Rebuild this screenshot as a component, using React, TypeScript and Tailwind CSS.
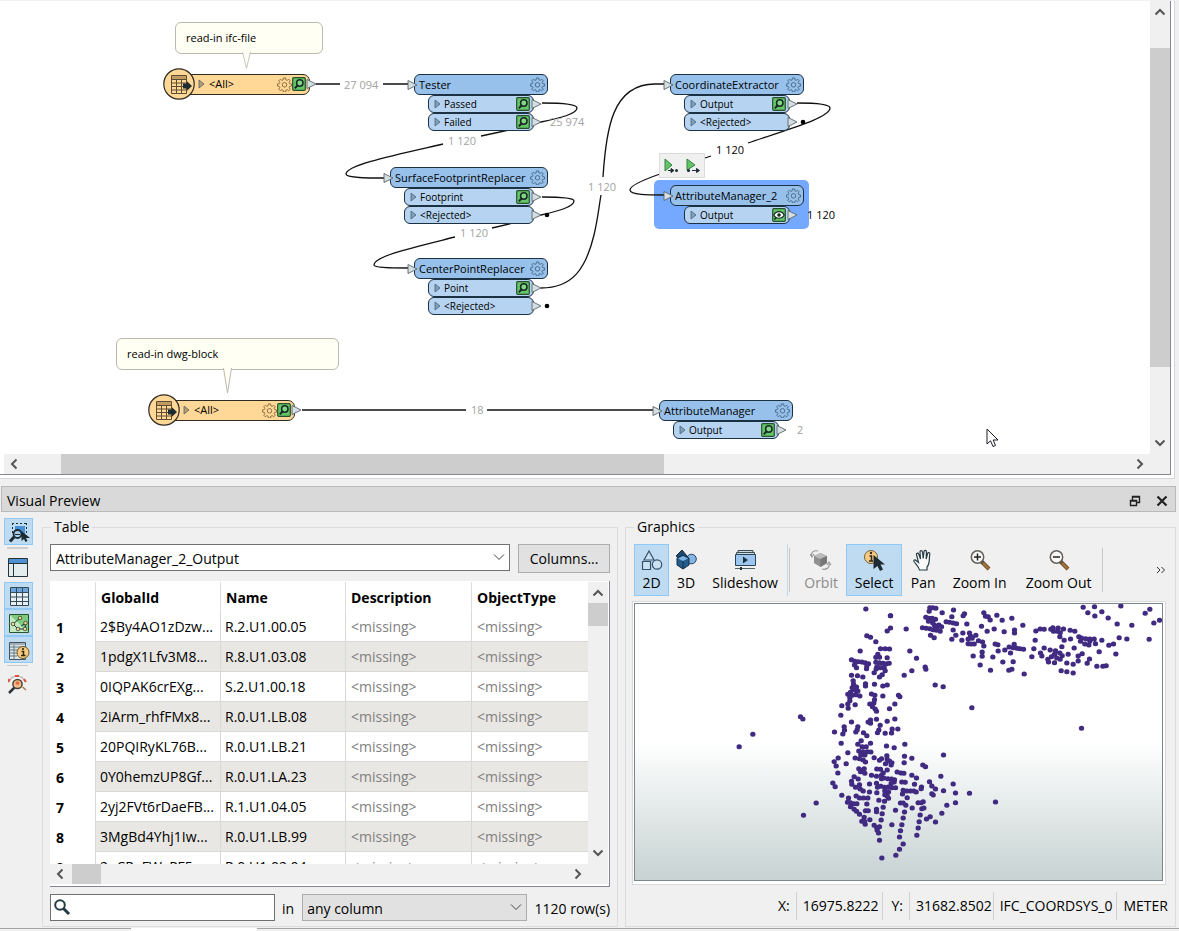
import { type ReactNode } from 'react'
import clsx from 'clsx'

interface PortInfo {
  name: string
  inspect?: 'lens' | 'eye'
}

interface TransformerInfo {
  name: string
  place: string
  ports: PortInfo[]
}

const TRANSFORMERS: TransformerInfo[] = [
  { name: 'Tester', place: 'left-[414px] top-[74px] w-[134px]', ports: [{ name: 'Passed', inspect: 'lens' }, { name: 'Failed', inspect: 'lens' }] },
  { name: 'SurfaceFootprintReplacer', place: 'left-[390px] top-[167px] w-[158px]', ports: [{ name: 'Footprint', inspect: 'lens' }, { name: '<Rejected>' }] },
  { name: 'CenterPointReplacer', place: 'left-[414px] top-[258px] w-[134px]', ports: [{ name: 'Point', inspect: 'lens' }, { name: '<Rejected>' }] },
  { name: 'CoordinateExtractor', place: 'left-[670px] top-[74px] w-[134px]', ports: [{ name: 'Output', inspect: 'lens' }, { name: '<Rejected>' }] },
  { name: 'AttributeManager_2', place: 'left-[670px] top-[185px] w-[134px]', ports: [{ name: 'Output', inspect: 'eye' }] },
  { name: 'AttributeManager', place: 'left-[659px] top-[400px] w-[134px]', ports: [{ name: 'Output', inspect: 'lens' }] },
]

const EDGES = [
  'M316 84H340M383 84H408',
  'M542 103C562 103 577 104 577 108C577 114 560 118 541 122C520 128 500 132 481 136M443 144C395 155 346 165 346 174C346 178 368 178 386 178',
  'M542 197C560 197 574 198 574 201C574 207 558 211 541 215C525 220 510 224 492 228M455 237C415 247 374 256 374 265C374 268 394 268 408 268',
  'M541 288C573 288 586 268 594 235C598 218 599 206 601 195M603 177C606 130 612 84 655 84H664',
  'M797 103C815 103 830 104 830 108C830 118 785 130 748 143M711 156L705 158M660 174C640 181 630 186 630 190C630 195 648 195 664 195',
  'M302 410H466M487 410H654',
]

const COUNTS = [
  { value: '27 094', place: 'left-[344px] top-[77px] text-[#a2a2a2]' },
  { value: '25 974', place: 'left-[550px] top-[114px] text-[#a2a2a2]' },
  { value: '1 120', place: 'left-[448px] top-[133px] text-[#a2a2a2]' },
  { value: '1 120', place: 'left-[460px] top-[225px] text-[#a2a2a2]' },
  { value: '1 120', place: 'left-[588px] top-[179px] text-[#a2a2a2]' },
  { value: '1 120', place: 'left-[716px] top-[142px] text-black' },
  { value: '1 120', place: 'left-[807px] top-[207px] text-black' },
  { value: '18', place: 'left-[471px] top-[402px] text-[#a2a2a2]' },
  { value: '2', place: 'left-[797px] top-[422px] text-[#a2a2a2]' },
]

const ROWS = [
  ['2$By4AO1zDzw...', 'R.2.U1.00.05'],
  ['1pdgX1Lfv3M8...', 'R.8.U1.03.08'],
  ['0IQPAK6crEXg...', 'S.2.U1.00.18'],
  ['2iArm_rhfFMx8...', 'R.0.U1.LB.08'],
  ['20PQIRyKL76B...', 'R.0.U1.LB.21'],
  ['0Y0hemzUP8Gf...', 'R.0.U1.LA.23'],
  ['2yj2FVt6rDaeFB...', 'R.1.U1.04.05'],
  ['3MgBd4Yhj1Iw...', 'R.0.U1.LB.99'],
  ['2oCRaFWxPF5...', 'R.0.U1.02.04'],
]

// x, y pairs in thirds of a pixel
const TOWER_POINTS = [
  439, 27, 513, 47, 513, 84, 503, 93, 560, 87, 442, 107, 453, 112, 469, 125, 422, 153, 483, 146, 497, 146, 510, 147,
  475, 163, 469, 172, 480, 172, 503, 173, 571, 153, 591, 175, 617, 201, 619, 208, 577, 212, 554, 226, 647, 255, 671, 260,
  757, 323, 396, 179, 406, 184, 416, 185, 427, 186, 437, 188, 447, 191, 405, 195, 411, 203, 442, 199, 441, 206, 469, 187,
  480, 188, 491, 190, 502, 191, 509, 190, 472, 201, 483, 203, 494, 203, 497, 212, 464, 218, 470, 207, 488, 224, 480, 231,
  396, 226, 414, 227, 430, 231, 401, 242, 402, 252, 438, 251, 438, 258, 465, 253, 490, 258, 503, 255, 398, 263, 411, 261,
  406, 270, 415, 273, 385, 283, 393, 277, 409, 284, 421, 288, 391, 293, 398, 286, 456, 282, 466, 286, 490, 288, 537, 286,
  541, 290, 391, 302, 385, 312, 407, 314, 367, 317, 386, 325, 465, 299, 463, 309, 451, 312, 459, 320, 467, 327, 471, 334,
  526, 312, 510, 326, 364, 346, 396, 366, 243, 350, 250, 357, 100, 403, 59, 440, 471, 358, 453, 360, 453, 370, 446, 366,
  503, 364, 526, 357, 482, 376, 374, 380, 375, 391, 370, 402, 415, 380, 413, 389, 409, 396, 345, 396, 432, 398, 442, 407,
  478, 390, 474, 398, 497, 400, 518, 387, 535, 387, 516, 399, 365, 430, 425, 422, 415, 433, 428, 440, 440, 440, 453, 430,
  418, 453, 431, 455, 444, 455, 454, 456, 501, 438, 524, 443, 556, 433, 385, 458, 424, 464, 436, 465, 356, 474, 344, 485,
  350, 498, 380, 491, 407, 474, 420, 476, 431, 480, 438, 486, 464, 473, 480, 481, 486, 476, 502, 467, 503, 478, 510, 483,
  517, 488, 498, 491, 515, 495, 555, 469, 577, 475, 554, 488, 672, 465, 610, 495, 618, 500, 355, 519, 418, 506, 434, 506,
  423, 515, 436, 520, 427, 511, 472, 507, 483, 508, 503, 510, 491, 519, 486, 526, 456, 526, 471, 529, 404, 530, 416, 537,
  533, 516, 544, 519, 553, 520, 577, 526, 591, 534, 664, 529, 493, 534, 505, 536, 516, 537, 525, 539, 486, 536, 340, 549,
  347, 560, 396, 544, 397, 553, 420, 554, 408, 562, 422, 567, 450, 552, 471, 550, 474, 562, 484, 559, 495, 562, 506, 561,
  517, 563, 528, 563, 515, 550, 524, 546, 547, 546, 557, 547, 585, 553, 630, 545, 637, 558, 648, 567, 701, 552, 431, 573,
  450, 576, 472, 578, 496, 573, 507, 576, 551, 571, 562, 573, 573, 573, 583, 573, 590, 576, 606, 561, 605, 566, 672, 572,
  637, 581, 641, 585, 708, 579, 750, 580, 367, 586, 387, 594, 410, 588, 420, 594, 432, 594, 445, 594, 478, 601, 496, 584,
  503, 588, 507, 595, 495, 604, 549, 582, 563, 593, 384, 607, 393, 608, 403, 611, 412, 611, 393, 620, 404, 628, 442, 612,
  543, 609, 551, 609, 559, 616, 596, 608, 605, 608, 611, 605, 578, 624, 607, 626, 613, 624, 708, 608, 682, 616, 290, 609,
  252, 646, 411, 634, 420, 643, 438, 632, 446, 632, 471, 628, 471, 635, 491, 622, 488, 641, 528, 631, 555, 636, 551, 654,
  602, 645, 667, 640, 434, 652, 427, 664, 435, 664, 451, 659, 437, 673, 485, 660, 599, 665, 621, 657, 632, 650, 648, 666,
  464, 676, 472, 684, 480, 680, 473, 691, 477, 699, 517, 674, 547, 674, 543, 692, 596, 684, 592, 706, 480, 721, 540, 711,
  551, 732, 540, 748, 529, 766, 487, 774,
]

const FIELD_POINTS = [
  151, 38, 160, 38, 169, 40, 149, 49, 188, 53, 222, 45, 255, 56, 251, 62, 139, 67, 148, 70, 158, 70, 168, 73, 147, 79,
  217, 65, 200, 80, 210, 82, 221, 84, 231, 86, 262, 87, 160, 84, 165, 91, 178, 90, 173, 95, 186, 95, 129, 98, 140, 100,
  151, 101, 161, 104, 171, 106, 182, 109, 153, 121, 164, 128, 221, 105, 229, 121, 217, 133, 250, 114, 247, 136, 270, 114,
  273, 123, 266, 132, 278, 130, 289, 121, 266, 146, 275, 147, 284, 147, 297, 137, 309, 141, 313, 153, 306, 94, 323, 109,
  313, 53, 318, 64, 326, 65, 332, 75, 352, 61, 368, 76, 397, 70, 344, 102, 374, 110, 405, 105, 405, 114, 430, 91, 281, 183,
  308, 171, 308, 184, 340, 186, 302, 210, 347, 147, 355, 149, 356, 168, 376, 165, 389, 156, 404, 148, 401, 158, 393, 174,
  412, 160, 421, 161, 432, 163, 370, 201, 401, 200, 388, 226, 397, 223, 333, 226, 434, 237, 33, 62, 469, 108, 482, 102,
  494, 103, 467, 136, 463, 161, 457, 185, 494, 159, 483, 174, 487, 183, 512, 165, 528, 167, 525, 178, 516, 185, 532, 189,
  505, 193, 507, 201, 525, 203, 514, 103, 520, 98, 536, 99, 522, 109, 533, 109, 542, 113, 552, 102, 541, 125, 554, 136,
  572, 106, 586, 109, 573, 132, 547, 155, 584, 159, 541, 174, 548, 182, 542, 193, 566, 178, 562, 204, 545, 227, 562, 230,
  581, 208, 581, 234, 596, 183, 608, 176, 596, 198, 598, 125, 606, 129, 619, 131, 631, 132, 644, 132, 603, 139, 616, 147,
  628, 150, 648, 146, 631, 139, 667, 136, 630, 192, 623, 205, 652, 214, 670, 214, 680, 212, 659, 170, 688, 151, 702, 147,
  709, 177, 719, 128, 742, 132, 713, 87, 686, 69, 646, 63, 625, 53, 611, 37, 645, 35, 667, 50, 724, 33, 757, 91, 797, 55,
  811, 43, 823, 84, 840, 76, 809, 133, 606, 400, 348, 621,
]

function toDots(points: number[]) {
  let path = ''
  for (let i = 0; i < points.length; i += 2) {
    path += `M${points[i]} ${points[i + 1]}h1`
  }
  return path
}

function Gear({ className }: { className?: string }) {
  return (
    <svg viewBox="0 0 24 24" className={clsx('size-[15px] shrink-0', className)} fill="none" stroke="currentColor" strokeWidth="1.5">
      <path d="M10.300 1.500h3.400l.5 3 2.100.9 2.500-1.800 2.400 2.400-1.800 2.500.9 2.100 3 .5v3.400l-3 .5-.9 2.100 1.800 2.500-2.400 2.400-2.500-1.800-2.100.9-.5 3h-3.400l-.5-3-2.100-.9-2.500 1.800-2.400-2.400 1.800-2.500-.9-2.100-3-.5v-3.400l3-.5.9-2.100-1.800-2.500 2.400-2.400 2.500 1.800 2.100-.9z" />
      <circle cx="12" cy="12.500" r="3.600" />
    </svg>
  )
}

function InspectIcon({ kind }: { kind: 'lens' | 'eye' }) {
  return (
    <svg viewBox="0 0 14 14" className="size-[14px] shrink-0">
      <rect x=".7" y=".7" width="12.600" height="12.600" rx="1" fill="#65c466" stroke="#27502f" strokeWidth="1.200" />
      {kind === 'lens' ? (
        <g fill="none" stroke="#182a26">
          <path d="M5.500 8.500 2.800 11.400" strokeWidth="2" />
          <circle cx="7.800" cy="6" r="3.200" strokeWidth="1.500" fill="#82d783" />
        </g>
      ) : (
        <g>
          <path d="M1.800 7C3.800 2.500 10.200 2.500 12.200 7 10.200 11.300 3.800 11.300 1.800 7Z" fill="#f2fbf2" stroke="#182a26" strokeWidth="1.200" />
          <circle cx="7" cy="7" r="1.800" fill="#182a26" />
          <path d="m4 9.500-1.600 2.100" stroke="#182a26" strokeWidth="1.500" />
        </g>
      )}
    </svg>
  )
}

function Expander({ className }: { className?: string }) {
  return (
    <svg viewBox="0 0 7 10" className={clsx('h-[10px] w-[7px] shrink-0', className)}>
      <path d="M1 1v8l5-4z" fill="currentColor" stroke="#4f6272" strokeWidth=".8" />
    </svg>
  )
}

function Connector({ className }: { className: string }) {
  return (
    <svg viewBox="0 0 11 12" className={clsx('absolute h-[12px] w-[11px]', className)}>
      <path d="M1 1.500v9L10 6z" fill="#d3dfe3" stroke="#5c6567" strokeWidth=".9" />
    </svg>
  )
}

function Transformer({ name, place, ports }: TransformerInfo) {
  return (
    <div className={clsx('absolute', place)}>
      <div className="relative flex h-[21px] items-center justify-between rounded-[6px] border border-[#1c3142] bg-[#97c1ea] pr-[2px] pl-1 text-[11px] whitespace-nowrap">
        <Connector className="-left-[8px]" />
        <span>{name}</span>
        <Gear className="text-[#45698a]" />
      </div>
      {ports.map((port) => (
        <div
          key={port.name}
          className="relative mx-[14px] flex h-[18px] items-center rounded-[6px] border border-[#1c3142] bg-[#b6d4f1] pr-[3px] pl-[5px] text-[10px]"
        >
          <Expander className="text-[#7f9fba]" />
          <span className="ml-[3px] flex-1">{port.name}</span>
          {port.inspect && <InspectIcon kind={port.inspect} />}
          <Connector className="-right-[9px]" />
        </div>
      ))}
    </div>
  )
}

function Reader({ place, width }: { place: string; width: string }) {
  return (
    <div className={clsx('absolute flex items-center', place)}>
      <svg viewBox="0 0 32 32" className="z-10 size-[32px] shrink-0">
        <circle cx="16" cy="16" r="15.200" fill="#ffd898" stroke="#2e2a22" strokeWidth="1.200" />
        <g fill="none" stroke="#5d4c2d">
          <path d="M8.500 7.500h15v18h-15zM8.500 11.500h15M8.500 15h15M8.500 18.500h15M8.500 22h15M13.500 11.500v14M18.500 11.500v14" />
          <path d="M9 9.500h14" stroke="#c09c63" strokeWidth="3" />
        </g>
        <path d="M20 15.500h4v-2.300l5 4.800-5 4.800v-2.300h-4z" fill="#1c2c30" />
      </svg>
      <div
        className={clsx(
          'relative -ml-[16px] flex h-[21px] items-center rounded-r-[7px] border border-[#2e2a22] bg-[#ffd898] pr-[3px] pl-[18px] text-[11px]',
          width,
        )}
      >
        <Expander className="text-[#b79c6c]" />
        <span className="ml-1 flex-1">&lt;All&gt;</span>
        <Gear className="text-[#86693a]" />
        <InspectIcon kind="lens" />
        <Connector className="-right-[8px]" />
      </div>
    </div>
  )
}

function Note({ place, tail, children }: { place: string; tail: string; children: ReactNode }) {
  return (
    <div className={clsx('absolute flex h-[32px] items-center rounded-[6px] border border-[#b9b9b2] bg-[#fffff3] px-[10px] text-[11px]', place)}>
      {children}
      <svg viewBox="0 0 9 26" preserveAspectRatio="none" className={clsx('absolute top-full -mt-px w-[9px]', tail)}>
        <path d="M.5 0 4.500 25 8.500 0" fill="#fffff3" stroke="#b9b9b2" />
      </svg>
    </div>
  )
}

function Chevron({ className }: { className?: string }) {
  return (
    <svg viewBox="0 0 12 12" className={clsx('size-[12px] shrink-0', className)}>
      <path d="m1.500 8.500 4.500-4.500 4.500 4.500" fill="none" stroke="#555" strokeWidth="2" />
    </svg>
  )
}

function DropArrow() {
  return (
    <svg viewBox="0 0 12 12" className="pointer-events-none absolute top-[7px] right-[5px] size-[12px]">
      <path d="m1 3.500 5 5 5-5" fill="none" stroke="#444" />
    </svg>
  )
}

function VerticalScrollbar({ thumb }: { thumb: string }) {
  return (
    <div className="flex w-[20px] shrink-0 flex-col items-center bg-[#f0f0f0]">
      <button type="button" aria-label="Scroll up" className="flex h-[21px] items-center">
        <Chevron />
      </button>
      <div className="relative w-full flex-1">
        <div className={clsx('absolute inset-x-0 bg-[#cdcdcd]', thumb)} />
      </div>
      <button type="button" aria-label="Scroll down" className="flex h-[23px] items-center">
        <Chevron className="rotate-180" />
      </button>
    </div>
  )
}

function HorizontalScrollbar({ thumb }: { thumb: string }) {
  return (
    <div className="flex h-[20px] flex-1 items-center bg-[#f0f0f0] px-1">
      <button type="button" aria-label="Scroll left">
        <Chevron className="-rotate-90" />
      </button>
      <div className="relative h-full flex-1">
        <div className={clsx('absolute inset-y-0 bg-[#cdcdcd]', thumb)} />
      </div>
      <button type="button" aria-label="Scroll right">
        <Chevron className="rotate-90" />
      </button>
    </div>
  )
}

function Workspace() {
  return (
    <section className="h-[480px] shrink-0 pt-px pr-[4px]" aria-label="Workspace canvas">
      <div className="flex h-[478px] flex-col border-r border-b border-[#d5d5da] bg-white pr-[3px] pb-[3px]">
        <div className="flex min-h-0 flex-1 flex-col border-r border-b border-[#828790]">
          <div className="flex min-h-0 flex-1">
            <div className="relative min-w-0 flex-1 overflow-hidden">
              <div className="absolute -top-px left-0 size-full">
                <div className="absolute top-[180px] left-[654px] h-[49px] w-[155px] rounded-[5px] bg-[#75a9ff]" />
                <svg width="900" height="452" className="absolute top-0 left-0">
                  {EDGES.map((edge) => (
                    <path key={edge} d={edge} fill="none" stroke="#111" strokeWidth="1.300" />
                  ))}
                  <g fill="#000">
                    <circle cx="547" cy="215" r="2.300" />
                    <circle cx="547" cy="306" r="2.300" />
                    <circle cx="803" cy="122" r="2.300" />
                  </g>
                </svg>
                {TRANSFORMERS.map((transformer) => (
                  <Transformer key={transformer.name} {...transformer} />
                ))}
                <Reader place="left-[163px] top-[68px]" width="w-[131px]" />
                <Reader place="left-[148px] top-[394px]" width="w-[131px]" />
                <Note place="left-[175px] top-[22px] w-[148px]" tail="left-[66px] h-[17px]">
                  read-in ifc-file
                </Note>
                <Note place="left-[116px] top-[338px] w-[223px]" tail="left-[106px] h-[26px]">
                  read-in dwg-block
                </Note>
                {COUNTS.map((count) => (
                  <span key={count.place} className={clsx('absolute text-[11px] leading-4', count.place)}>
                    {count.value}
                  </span>
                ))}
                <div className="absolute top-[153px] left-[659px] flex h-[25px] w-[46px] items-center justify-around border border-[#dcdcdc] bg-[#f0f0f0]">
                  <button type="button" aria-label="Run to this">
                    <svg viewBox="0 0 16 16" className="size-[16px]">
                      <path d="M2 1v12l7-6z" fill="#62c565" stroke="#378244" />
                      <path d="M5 12.500h5M8 10.500v4l3-2z" fill="#1d3035" stroke="#1d3035" />
                      <circle cx="13.500" cy="12.500" r="1.500" fill="#1d3035" />
                    </svg>
                  </button>
                  <button type="button" aria-label="Run from this">
                    <svg viewBox="0 0 16 16" className="size-[16px]">
                      <path d="M2 1v11l8-5z" fill="#62c565" stroke="#378244" />
                      <circle cx="3.500" cy="12.500" r="1.600" fill="#1d3035" />
                      <path d="M7 12.500h5M11.500 10.500v4l3-2z" fill="#1d3035" stroke="#1d3035" />
                    </svg>
                  </button>
                </div>
                <svg viewBox="0 0 13 20" className="absolute top-[428px] left-[986px] h-[20px] w-[13px]">
                  <path d="M1 1v15l3.500-3.200L7 18.500l2.500-1-2.300-5.500H12z" fill="#fff" stroke="#1a1a28" />
                </svg>
              </div>
            </div>
            <VerticalScrollbar thumb="top-[26px] h-[319px]" />
          </div>
          <div className="flex pl-[4px]">
            <HorizontalScrollbar thumb="left-[41px] w-[603px]" />
            <div className="w-[20px] bg-[#f0f0f0]" />
          </div>
        </div>
      </div>
    </section>
  )
}

function SideButton({ label, active, children }: { label: string; active?: boolean; children: ReactNode }) {
  return (
    <button
      type="button"
      aria-label={label}
      className={clsx(
        'flex h-[27px] w-[29px] items-center justify-center border',
        active ? 'border-[#90c8f6] bg-[#bfdbf2]' : 'border-transparent',
      )}
    >
      <svg viewBox="0 0 22 22" className="size-[22px]">
        {children}
      </svg>
    </button>
  )
}

function SideToolbar() {
  return (
    <nav className="flex w-[37px] shrink-0 flex-col items-start pt-[6px] pl-1" aria-label="Preview views">
      <SideButton label="Inspect selection" active>
        <path d="M4 2.500h14M4.500 2v12M18.500 2v12" fill="none" stroke="#1d3035" strokeDasharray="2 2" />
        <path d="M7 5h10v8H7z" fill="#4b8fd6" />
        <path d="M13.500 10v10l2.500-2 1.500 3 2-1-1.500-3H22z" fill="#1d2c33" />
        <path d="m6.500 15.500-4.500 5" stroke="#1d2c33" strokeWidth="3" />
        <circle cx="9.500" cy="13" r="4" fill="#a8cdec" stroke="#1d2c33" strokeWidth="1.800" />
        <path d="M7 13.500h5" stroke="#1d2c33" />
      </SideButton>
      <hr className="mt-[2px] ml-[3px] w-[21px] border-t-2 border-[#cfcfcf]" />
      <div className="mt-[4px] mb-[2px]">
        <SideButton label="Toggle layout">
          <path d="M.5 2.500h19v18H.5z" fill="#e2ebee" stroke="#22343a" />
          <path d="M1 3h18v4H1z" fill="#4f8fd2" />
          <path d="M1 7.500h18M5.500 7.500v13" stroke="#22343a" />
        </SideButton>
      </div>
      <SideButton label="Table view" active>
        <path d="M2.500 2.500h18v18h-18z" fill="#e8f0f3" />
        <path d="M3 3h17v4H3z" fill="#6aa3de" />
        <path d="M2.500 2.500h18v18h-18zM2.500 7.500h18M2.500 12h18M2.500 16.500h18M8.500 2.500v18M14.500 2.500v18" fill="none" stroke="#344a57" />
      </SideButton>
      <SideButton label="Graphics view" active>
        <path d="M1.500 2.500h19v18h-19z" fill="#7ecb7f" stroke="#285432" />
        <path d="m2 3 18 17H2z" fill="#c4eac2" />
        <path d="m12 6-7 6 5 5h7l.5-5.500L13 14" fill="none" stroke="#1d3035" />
        <g fill="#f8d58f" stroke="#1d3035" strokeWidth=".7">
          <circle cx="5" cy="12" r="1.800" />
          <circle cx="12" cy="6" r="1.800" />
          <circle cx="10" cy="17" r="1.800" />
          <circle cx="17" cy="17" r="1.800" />
          <circle cx="17.500" cy="11" r="1.800" />
        </g>
      </SideButton>
      <SideButton label="Feature information" active>
        <path d="M1.500 3.500h16v17h-16z" fill="#dce5e9" stroke="#44555e" />
        <path d="M2 5h15M2 8h15M2 11h8M2 14h7M2 17h7M6 6v14" stroke="#657982" />
        <circle cx="15" cy="13.500" r="6" fill="#f8cc7c" stroke="#6f5527" />
        <path d="M13.500 12.500h2v4M13 16.500h4.500" fill="none" stroke="#332610" strokeWidth="1.500" />
        <circle cx="15" cy="10" r="1.100" fill="#332610" />
      </SideButton>
      <hr className="mt-[2px] ml-[3px] w-[21px] border-t border-[#c9c9c9]" />
      <div className="mt-[4px]">
        <SideButton label="Visualize elsewhere">
          <path d="M1 9C4 1 14 1 17 9" fill="#f6f4f2" stroke="#bdbdbd" strokeWidth="1.500" />
          <path d="M1.500 6 0 9M16 6l2 3M7 3h4" stroke="#e05138" strokeWidth="2" />
          <path d="m7 14-6 6" stroke="#303537" strokeWidth="2.500" />
          <circle cx="9.500" cy="11" r="4.600" fill="#f3c08a" stroke="#4c4238" strokeWidth="1.500" />
          <path d="m7 10 2.500-2 2.500 2-2.500 2.500z" fill="#e16d44" />
          <path d="m14.500 14 3.500 3" stroke="#b5764b" strokeWidth="1.500" />
        </SideButton>
      </div>
    </nav>
  )
}

function TablePanel() {
  return (
    <fieldset className="mt-[5px] ml-[5px] flex min-w-0 flex-[577_1_0] flex-col border border-[#dcdcdc] px-[7px] pb-[5px]">
      <legend className="ml-[1px] px-[3px] leading-[20px]">Table</legend>
      <div className="flex items-start gap-2 pt-[7px]">
        <div className="relative flex-1">
          <select aria-label="Feature type" className="h-[27px] w-full appearance-none border border-[#707070] bg-white px-[5px] pt-[2px]">
            <option>AttributeManager_2_Output</option>
          </select>
          <DropArrow />
        </div>
        <button type="button" className="h-[29px] w-[92px] border border-[#adadad] bg-[#e1e1e1]">
          Columns...
        </button>
      </div>
      <div className="mt-[8px] flex min-h-0 flex-1 flex-col border-r border-b border-[#828790] bg-white pt-px pr-px pb-[2px]">
        <div className="flex min-h-0 flex-1">
          <div className="min-w-0 flex-1 overflow-hidden">
            <table className="w-full table-fixed border-separate border-spacing-0 text-left whitespace-nowrap">
              <colgroup>
                <col className="w-[45px]" />
                <col className="w-[125px]" />
                <col className="w-[125px]" />
                <col className="w-[126px]" />
                <col />
              </colgroup>
              <thead>
                <tr className="h-[30px] font-bold">
                  <td />
                  {['GlobalId', 'Name', 'Description', 'ObjectType'].map((heading) => (
                    <th key={heading} scope="col" className="border-l border-[#dedede] px-[5px] pt-[2px]">
                      {heading}
                    </th>
                  ))}
                </tr>
              </thead>
              <tbody>
                {ROWS.map(([globalId, name], index) => (
                  <tr key={globalId} className="group h-[30px]">
                    <th scope="row" className="bg-white pt-[2px] pl-[6px]">
                      {index + 1}
                    </th>
                    <td className="overflow-hidden border-b border-l border-[#d8d8d8] pl-1 group-even:bg-[#e9e7e3]">{globalId}</td>
                    <td className="overflow-hidden border-b border-l border-[#d8d8d8] pl-1 group-even:bg-[#e9e7e3]">{name}</td>
                    <td className="border-b border-l border-[#d8d8d8] pl-[5px] text-[#808080] group-even:bg-[#e9e7e3]">&lt;missing&gt;</td>
                    <td className="border-b border-l border-[#d8d8d8] pl-[5px] text-[#808080] group-even:bg-[#e9e7e3]">&lt;missing&gt;</td>
                  </tr>
                ))}
              </tbody>
            </table>
          </div>
          <VerticalScrollbar thumb="top-0 h-[23px]" />
        </div>
        <div className="flex">
          <HorizontalScrollbar thumb="left-[6px] w-[29px]" />
          <div className="w-[20px] bg-[#f0f0f0]" />
        </div>
      </div>
      <div className="mt-[7px] flex items-center">
        <div className="relative w-[225px]">
          <input aria-label="Search" type="text" className="block h-[27px] w-full border border-[#707070] bg-white pr-1 pl-[24px] outline-none" />
          <svg viewBox="0 0 18 18" className="pointer-events-none absolute top-[4px] left-[3px] size-[18px]" fill="none" stroke="#253d43">
            <circle cx="7" cy="7" r="4.800" strokeWidth="2" />
            <path d="m10.500 10.500 5.500 5.500" strokeWidth="3" />
          </svg>
        </div>
        <label htmlFor="search-column" className="mr-2 ml-[7px] pt-[2px]">
          in
        </label>
        <div className="relative flex-1">
          <select id="search-column" className="block h-[27px] w-full appearance-none border border-[#adadad] bg-[#e1e1e1] px-1 pt-[2px]">
            <option>any column</option>
          </select>
          <DropArrow />
        </div>
        <span className="ml-2 pt-[2px]">1120 row(s)</span>
      </div>
    </fieldset>
  )
}

function ToolButton({
  label,
  width,
  active,
  disabled,
  children,
}: {
  label: string
  width: string
  active?: boolean
  disabled?: boolean
  children: ReactNode
}) {
  return (
    <button
      type="button"
      disabled={disabled}
      className={clsx(
        'flex h-[52px] shrink-0 flex-col items-center border pt-[4px] whitespace-nowrap',
        width,
        active ? 'border-[#90c8f6] bg-[#bfdbf2]' : 'border-transparent',
        disabled && 'text-[#8b8b8b]',
      )}
    >
      <svg viewBox="0 0 22 22" className="size-[22px]">
        {children}
      </svg>
      <span className="mt-[2px] leading-[20px]">{label}</span>
    </button>
  )
}

function GraphicsToolbar() {
  return (
    <div className="flex items-center">
      <ToolButton label="2D" width="w-[35px]" active>
        <g fill="#cbe0f1" stroke="#35536b" strokeWidth="1.200">
          <path d="M8 2 3 11h10z" />
          <path d="M1.500 12.500h8v8h-8z" />
          <circle cx="16" cy="15.500" r="4.700" />
        </g>
      </ToolButton>
      <ToolButton label="3D" width="w-[34px]">
        <path d="M7 1 1 7l5 3 6-3z" fill="#1e4b70" stroke="#132b3d" />
        <circle cx="16.500" cy="10" r="4.800" fill="#85b5e6" stroke="#234562" />
        <path d="m2 9 6-3 6 3v7l-6 4-6-4z" fill="#245d8c" stroke="#122e44" />
        <path d="m3 9.500 5 2.500 5-2.500-5-2.500z" fill="#7fb5e4" />
        <path d="M8 12v8" stroke="#122e44" />
      </ToolButton>
      <ToolButton label="Slideshow" width="w-[84px]">
        <path d="M4 3.500V1.500h15v2M2.500 6V3.500h18V6" fill="#cbdae5" stroke="#3b4c55" />
        <path d="M1.500 5.500h20v11h-20z" fill="#9cc6ef" stroke="#2b4357" />
        <path d="M9 7.500v7l5-3.500z" fill="#1d3035" />
        <path d="M1 19.500h20" stroke="#53636b" />
        <path d="M6 18v3h2v-3z" fill="#1d3035" />
      </ToolButton>
      <div className="h-[52px] w-px bg-[#bddaf1]" />
      <div className="mr-[8px] ml-px h-[44px] w-px bg-[#c9c9c9]" />
      <ToolButton label="Orbit" width="w-[46px]" disabled>
        <path d="m4 7 6.500-3L17 7v7l-6.500 4L4 14z" fill="#909090" />
        <path d="m4 7 6.500-3L17 7l-6.500 3z" fill="#bbb" />
        <path d="M10.500 10v8l6.500-4V7z" fill="#777" />
        <path d="M8 2C4 1 1 3 1.500 7M0 5l2 3 2-3M12 20c4 1 8-1 7-5M17 16l2-3 2 3" fill="none" stroke="#999" strokeWidth="1.200" />
      </ToolButton>
      <div className="ml-[2px]">
        <ToolButton label="Select" width="w-[56px]" active>
          <circle cx="8" cy="8" r="6.500" fill="#f7cb81" stroke="#755f3e" />
          <path d="M6.500 7h2v5M6 12h4" fill="none" stroke="#302a22" strokeWidth="1.500" />
          <circle cx="8" cy="4" r="1.200" fill="#302a22" />
          <path d="M10.500 6v14l4-3 2.500 5 3-1.500-2.500-5h4.500z" fill="#1d2c33" />
        </ToolButton>
      </div>
      <ToolButton label="Pan" width="w-[42px]">
        <path
          d="M7.500 21c-.5-3-3-5-5.500-8.500-.7-1.200.8-2.200 2-1l2.500 2-2-8c-.3-1.700 1.700-2 2.200-.5L8.500 10 8 3c0-1.900 2.300-1.900 2.500 0l.7 6.500L12 2.500c.2-1.800 2.400-1.500 2.400.2L14.200 10l1.400-5.500c.5-1.500 2.400-1 2.200.5-1 6 .3 10-2.800 13v3z"
          fill="#fafafa"
          stroke="#273d43"
          strokeWidth="1.200"
        />
      </ToolButton>
      <ToolButton label="Zoom In" width="w-[71px]">
        <path d="m12.500 12.500 7.500 7.500" stroke="#5b4632" strokeWidth="4" />
        <path d="m14 14 6 6" stroke="#a66f35" strokeWidth="2.500" />
        <circle cx="8.500" cy="8" r="6.200" fill="#f8f8f8" stroke="#65605b" strokeWidth="1.500" />
        <path d="M5 8h7M8.500 4.500v7" stroke="#222" strokeWidth="1.500" />
      </ToolButton>
      <ToolButton label="Zoom Out" width="w-[87px]">
        <path d="m12.500 12.500 7.500 7.500" stroke="#5b4632" strokeWidth="4" />
        <path d="m14 14 6 6" stroke="#a66f35" strokeWidth="2.500" />
        <circle cx="8.500" cy="8" r="6.200" fill="#f8f8f8" stroke="#65605b" strokeWidth="1.500" />
        <path d="M5 8h7" stroke="#222" strokeWidth="1.500" />
      </ToolButton>
      <div className="h-[44px] w-px bg-[#c9c9c9]" />
      <button type="button" aria-label="More tools" className="ml-auto">
        <svg viewBox="0 0 10 8" className="h-[8px] w-[10px]">
          <path d="m1 1 3 3-3 3M5.500 1l3 3-3 3" fill="none" stroke="#333" />
        </svg>
      </button>
    </div>
  )
}

function GraphicsPanel() {
  return (
    <fieldset className="mt-[5px] mr-[3px] ml-[7px] flex min-w-0 flex-[550_1_0] flex-col border border-[#dcdcdc] pr-[9px] pb-[5px] pl-[6px]">
      <legend className="ml-[2px] px-[3px] leading-[20px]">Graphics</legend>
      <div className="pt-[7px] pl-[2px]">
        <GraphicsToolbar />
      </div>
      <div className="mt-[5px] flex min-h-0 flex-1 border border-[#d9d9d9] bg-white pt-px pr-[2px] pb-[3px] pl-px">
        <div className="min-h-0 min-w-0 flex-1 overflow-hidden border border-[#7c858b] bg-linear-to-b from-white from-50% to-[#c7d2d2]">
          <svg viewBox="0 0 1584 828" preserveAspectRatio="xMinYMin slice" className="size-full">
            <g fill="none" stroke="#412b82" strokeWidth="15" strokeLinecap="round">
              <path d={toDots(TOWER_POINTS)} transform="translate(253 -12)" />
              <path d={toDots(FIELD_POINTS)} transform="translate(733 -27)" />
            </g>
          </svg>
        </div>
      </div>
      <div className="mt-[6px] flex h-[30px] items-center justify-end whitespace-nowrap">
        <span className="pr-[6px]">X:</span>
        <span className="border-l border-[#d0d0d0] pr-[4px] pl-[6px] leading-[28px]">16975.8222</span>
        <span className="border-l border-[#d0d0d0] pr-[6px] pl-[8px] leading-[28px]">Y:</span>
        <span className="border-l border-[#d0d0d0] pr-px pl-[6px] leading-[28px]">31682.8502</span>
        <span className="border-l border-[#d0d0d0] pr-[4px] pl-[6px] leading-[28px]">IFC_COORDSYS_0</span>
        <span className="-mr-[2px] border-l border-[#d0d0d0] pl-[6px] leading-[28px]">METER</span>
      </div>
    </fieldset>
  )
}

export default function App() {
  return (
    <main className="flex h-screen min-h-[760px] flex-col overflow-hidden bg-[#f0f0f0] font-['Open_Sans','Noto_Sans',sans-serif] text-[14px] leading-[20px] text-black">
      <Workspace />
      <section className="flex min-h-0 flex-1 flex-col" aria-label="Visual Preview">
        <header className="mt-[6px] mr-[3px] ml-px flex h-[26px] shrink-0 items-center border border-[#b9b9b9] bg-[#d9d9d9] pt-[4px] pr-[7px] pl-[5px]">
          <h1 className="flex-1">Visual Preview</h1>
          <button type="button" aria-label="Float panel" className="mr-[15px]">
            <svg viewBox="0 0 12 12" className="size-[12px]" fill="none" stroke="#222">
              <path d="M3.500 5V1.500h7v6H8M3 2h8" strokeWidth="1.400" />
              <path d="M1.500 5.500h6v5h-6zM1 6h7" strokeWidth="1.400" />
            </svg>
          </button>
          <button type="button" aria-label="Close panel">
            <svg viewBox="0 0 12 12" className="size-[12px]">
              <path d="m1.500 1.500 9 9m0-9-9 9" stroke="#222" strokeWidth="2.200" />
            </svg>
          </button>
        </header>
        <div className="flex min-h-0 flex-1">
          <SideToolbar />
          <TablePanel />
          <GraphicsPanel />
        </div>
        <div className="mt-px flex h-[3px] shrink-0">
          <div className="w-[131px] border-t border-[#a3a3a3]" />
          <div className="w-[126px] bg-white" />
          <div className="flex-1 border-t border-[#a3a3a3]" />
        </div>
      </section>
    </main>
  )
}
